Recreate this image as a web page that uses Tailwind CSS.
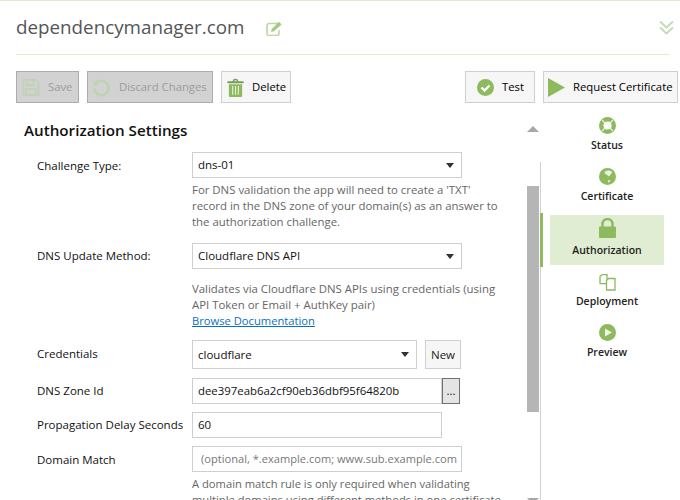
<!DOCTYPE html>
<html lang="en">

<head>
    <meta charset="UTF-8">
    <script src="https://cdn.jsdelivr.net/npm/@tailwindcss/browser@4"></script>
    <title>Authorization Settings</title>
</head>

<body class="bg-white">
    <div class="w-[680px] h-[500px] overflow-hidden flex flex-col border-t border-[#dfecd0] font-['Open_Sans','Noto_Sans',sans-serif] text-[11.5px] text-[#111]">
        <!-- title -->
        <div class="mr-[10px] ml-4 h-[54px] shrink-0 flex items-center border-b border-[#e0ecd2]">
            <h1 class="text-[18.8px] text-[#555] leading-none">dependencymanager.com</h1>
            <svg class="ml-[22px] mt-0.5" width="17" height="15" viewBox="0 0 17 15"><path d="M12 2.500H3a2 2 0 0 0-2 2v8a2 2 0 0 0 2 2h8a2 2 0 0 0 2-2V9" fill="none" stroke="#bcd6a6" stroke-width="1.600"/><path d="M5 11l.7-3L13 .8l2.600 2.600L8 10.300z" fill="#a5c98a"/></svg>
            <svg class="ml-auto -mr-1" width="15" height="15" viewBox="0 0 15 15" fill="none" stroke="#c5dab8" stroke-width="2"><path d="M1 1.500l6.500 6 6.500-6M1 7.500l6.500 6 6.500-6"/></svg>
        </div>

        <!-- toolbar -->
        <div class="mt-4 ml-4 mr-0.5 h-8 shrink-0 flex gap-2 whitespace-nowrap text-[11.3px]">
            <button class="h-8 w-[63px] flex items-center pl-[5px] gap-2 bg-[#d2d2d2] border border-[#adadad] text-[#9c9c9c]">
                <svg width="18" height="19" viewBox="0 0 19 19" class="shrink-0"><path d="M1.500 1.500h13l3 3v13h-16z" fill="none" stroke="#bfd3b2" stroke-width="1.800"/><path d="M5 2v5h7V2M4.500 11h10v6h-10z" fill="none" stroke="#bfd3b2" stroke-width="1.600"/></svg>
                <span class="mt-px">Save</span>
            </button>
            <button class="h-8 w-[126px] flex items-center pl-1 gap-[9px] bg-[#d2d2d2] border border-[#adadad] text-[#9c9c9c]">
                <svg width="18" height="19" viewBox="0 0 19 19" fill="none" stroke="#bfd3b2" stroke-width="3" class="shrink-0"><path d="M4 5.500a7.500 7.500 0 1 1-1.500 5"/><path d="M1.500 1.500v6h6" stroke="none" fill="#bfd3b2"/></svg>
                <span class="mt-px">Discard Changes</span>
            </button>
            <button class="h-8 w-[70px] flex items-center pl-[5px] gap-2 bg-[#f6f6f6] border border-[#cfcfcf] text-black">
                <svg width="17" height="19" viewBox="0 0 17 20" class="shrink-0"><path d="M0 3.500h17V5.500H0zM5.500 3.500c0-3.500 6-3.500 6 0h-1.500c0-1.500-3-1.500-3 0z" fill="#7a9a55"/><path d="M1.500 6.500h14V19a1 1 0 0 1-1 1h-12a1 1 0 0 1-1-1z" fill="#8cba5c"/><path d="M5.500 8.500v9M8.500 8.500v9M11.500 8.500v9" stroke="#e6efdb" stroke-width="1.200"/></svg>
                <span class="mt-px">Delete</span>
            </button>
            <button class="ml-auto h-8 w-[70px] flex items-center pl-[11px] gap-2 bg-[#f6f6f6] border border-[#cfcfcf] text-black">
                <svg width="17" height="17" viewBox="0 0 17 17" class="shrink-0"><circle cx="8.500" cy="8.500" r="8.500" fill="#8cba5c"/><path d="M4.500 8.500l3 3 5-5" fill="none" stroke="#fff" stroke-width="2.400"/></svg>
                <span class="mt-px">Test</span>
            </button>
            <button class="h-8 w-[135px] flex items-center pl-1 gap-2 bg-[#f6f6f6] border border-[#cfcfcf] text-black">
                <svg width="17" height="19" viewBox="0 0 17 19" class="shrink-0"><path d="M0 0l17 9.500L0 19z" fill="#8cba5c"/></svg>
                <span class="mt-px">Request Certificate</span>
            </button>
        </div>

        <div class="flex flex-1 min-h-0 mt-[19px]">
            <!-- settings pane -->
            <div class="w-[503px] ml-6 shrink-0">
                <h2 class="text-[15.2px] font-semibold leading-[16px] mb-[14px]">Authorization Settings</h2>
                <div class="ml-[13px] flex flex-col">
                    <div class="flex">
                        <label class="w-[155px] shrink-0 pt-[5px] leading-[18px]">Challenge Type:</label>
                        <div class="w-[270px]">
                            <div class="h-[26px] flex items-center justify-between px-[5px] border border-[#cfcfcf]">dns-01<span class="w-0 h-0 border-x-[4px] border-x-transparent border-t-[5px] border-t-[#333] mr-0.5"></span></div>
                            <p class="mt-1 w-[310px] text-[11.4px] leading-[16px] text-[#666]">For DNS validation the app will need to create a 'TXT' record in the DNS zone of your domain(s) as an answer to the authorization challenge.</p>
                        </div>
                    </div>
                    <div class="flex mt-[13px]">
                        <label class="w-[155px] shrink-0 pt-[4px] leading-[18px]">DNS Update Method:</label>
                        <div class="w-[270px]">
                            <div class="h-[26px] flex items-center justify-between px-[5px] border border-[#cfcfcf]">Cloudflare DNS API<span class="w-0 h-0 border-x-[4px] border-x-transparent border-t-[5px] border-t-[#333] mr-0.5"></span></div>
                            <p class="mt-3 w-[310px] text-[11.4px] leading-[16px] text-[#666]">Validates via Cloudflare DNS APIs using credentials (using API Token or Email + AuthKey pair)<br><a class="text-[#0b6fc9] underline text-[11.2px]">Browse Documentation</a></p>
                        </div>
                    </div>
                    <div class="flex mt-[11px]">
                        <label class="w-[155px] shrink-0 pt-[5px] leading-[18px]">Credentials</label>
                        <div class="w-[225px] h-[29px] flex items-center justify-between px-[5px] border border-[#cfcfcf]">cloudflare<span class="w-0 h-0 border-x-[4px] border-x-transparent border-t-[5px] border-t-[#333] mr-0.5"></span></div>
                        <button class="ml-2 w-9 h-[29px] bg-[#f6f6f6] border border-[#cfcfcf] text-[#222]">New</button>
                    </div>
                    <div class="flex mt-[9px]">
                        <label class="w-[155px] shrink-0 pt-[4px] leading-[18px]">DNS Zone Id</label>
                        <div class="w-[250px] h-[26px] flex items-center px-[5px] border border-[#cfcfcf] text-[11.4px]">dee397eab6a2cf90eb36dbf95f64820b</div>
                        <button class="w-[18px] h-[26px] bg-[#e4e4e4] border border-[#707070] leading-none">...</button>
                    </div>
                    <div class="flex mt-2">
                        <label class="w-[155px] shrink-0 pt-[4px] leading-[18px] whitespace-nowrap">Propagation Delay Seconds</label>
                        <div class="w-[250px] h-[26px] flex items-center px-[5px] border border-[#cfcfcf]">60</div>
                    </div>
                    <div class="flex mt-2">
                        <label class="w-[155px] shrink-0 pt-[5px] leading-[18px]">Domain Match</label>
                        <div class="w-[270px]">
                            <div class="h-[26px] flex items-center px-2 border border-[#cfcfcf] text-[#777] text-[11.1px] whitespace-nowrap overflow-hidden">(optional, *.example.com; www.sub.example.com</div>
                            <p class="mt-1 w-[322px] text-[11.2px] leading-[16px] text-[#666]">A domain match rule is only required when validating multiple domains using different methods in one certificate</p>
                        </div>
                    </div>
                </div>
            </div>

            <!-- scrollbar -->
            <div class="w-[12px] shrink-0 pt-1 relative bg-white">
                <div class="w-0 h-0 border-x-[6px] border-x-transparent border-b-[6px] border-b-[#a8a8a8]"></div>
                <div class="mt-[54px] h-[226px] bg-[#b5b5b5]"></div>
                <div class="mt-[86px] w-0 h-0 border-x-[6px] border-x-transparent border-t-[6px] border-t-[#a8a8a8]"></div>
            </div>

            <!-- side nav -->
            <div class="flex-1 min-w-0 flex mt-10">
                <div class="w-[3px] ml-px shrink-0 border-l border-[#d0d0d0] relative">
                    <div class="absolute -left-px top-[51px] w-[3px] h-[54px] bg-[#8cba5c]"></div>
                </div>
                <nav class="ml-[7px] w-[114px] -mt-[45px] flex flex-col items-center font-semibold text-[10.5px] text-[#222] leading-[16px]">
                    <div class="h-[51px] w-full flex flex-col items-center">
                        <svg width="17" height="17" viewBox="0 0 17 17"><circle cx="8.500" cy="8.500" r="6.300" fill="none" stroke="#8cba5c" stroke-width="4.400"/><path d="M3 3l3 3M14 3l-3 3M3 14l3-3M14 14l-3-3" stroke="#e6f0dc" stroke-width="1.300"/></svg>
                        <span class="mt-[3px]">Status</span>
                    </div>
                    <div class="h-[47px] w-full flex flex-col items-center">
                        <svg width="17" height="17" viewBox="0 0 17 17"><circle cx="8.500" cy="8.500" r="8.500" fill="#8cba5c"/><path d="M6 3.500c2-1.500 6-1 7 .5-.5 2.500-2 2-2.500 4-1 1-2-1-3-1.500C6 6 5 5 6 3.500zM9 12.500c1-.5 2-.5 2.500 0l-1.500 2c-1 0-1.500-1-1-2z" fill="#e9f2df"/></svg>
                        <span class="mt-[3px]">Certificate</span>
                    </div>
                    <div class="h-[50px] w-full flex flex-col items-center bg-[#e0edd2] pt-[3px]">
                        <svg width="17" height="20" viewBox="0 0 17 20"><path d="M3.500 9V6a5 5 0 0 1 10 0v3" fill="none" stroke="#8cba5c" stroke-width="2.400"/><path d="M1 8.500h15a1 1 0 0 1 1 1V19a1 1 0 0 1-1 1H1a1 1 0 0 1-1-1V9.500a1 1 0 0 1 1-1z" fill="#8cba5c"/></svg>
                        <span class="mt-1 leading-[16px]">Authorization</span>
                    </div>
                    <div class="h-[50px] w-full flex flex-col items-center pt-[9px]">
                        <svg width="17" height="17" viewBox="0 0 17 17" fill="#fff" stroke="#8cba5c" stroke-width="1.300"><path d="M1 2.500L3 .7h5v9H1z"/><path d="M7.500 6.500l2-2h6.500v11.500H7.500z"/></svg>
                        <span class="mt-[2px]">Deployment</span>
                    </div>
                    <div class="h-[51px] w-full flex flex-col items-center pt-[9px]">
                        <svg width="17" height="17" viewBox="0 0 17 17"><circle cx="8.500" cy="8.500" r="8.500" fill="#8cba5c"/><path d="M6 4.500l7 4-7 4z" fill="#f0f5e9"/></svg>
                        <span class="mt-[3px]">Preview</span>
                    </div>
                </nav>
            </div>
        </div>
    </div>
</body>

</html>
